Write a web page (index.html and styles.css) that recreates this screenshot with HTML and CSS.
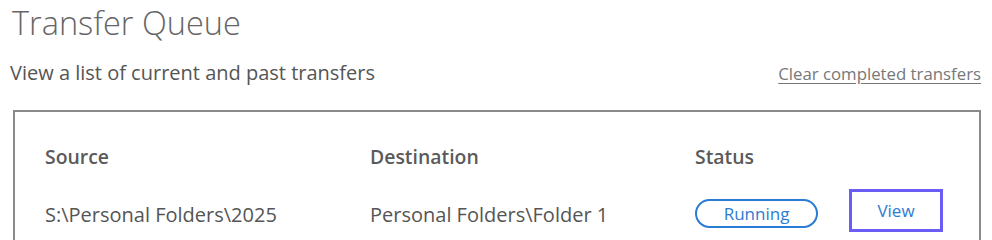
FILE: index.html
```html
<!DOCTYPE html>
<html lang="en">
<head>
<meta charset="utf-8">
<title>Transfer Queue</title>
<link rel="stylesheet" href="styles.css">
</head>
<body>
<main class="page">
  <h1 class="title">Transfer Queue</h1>
  <div class="subhead">
    <p class="subtitle">View a list of current and past transfers</p>
    <a class="clear-link" href="#">Clear completed transfers</a>
  </div>
  <section class="queue">
    <div class="grid">
      <div class="th">Source</div>
      <div class="th">Destination</div>
      <div class="th">Status</div>
      <div class="th"></div>
      <div class="td text-cell">S:\Personal Folders\2025</div>
      <div class="td text-cell">Personal Folders\Folder 1</div>
      <div class="td status-cell"><span class="pill">Running</span></div>
      <div class="td"><button class="view-btn" type="button">View</button></div>
    </div>
  </section>
</main>
</body>
</html>
```

FILE: styles.css
```css
html, body {
  margin: 0;
  padding: 0;
  background: #ffffff;
}
body {
  font-family: "Open Sans", "Noto Sans", "Liberation Sans", sans-serif;
  color: #605e5c;
  overflow: hidden;
}
.page {
  padding: 0 11px 0 10px;
}
.title {
  margin: 0 0 0 2px;
  font-size: 32.5px;
  font-weight: 300;
  line-height: 46px;
  color: #666666;
}
.subhead {
  display: flex;
  justify-content: space-between;
  align-items: baseline;
  margin-top: 14px;
}
.subtitle {
  margin: 0;
  font-size: 20px;
  line-height: 26px;
  color: #555555;
}
.clear-link {
  font-size: 16.8px;
  color: #777777;
  text-decoration: underline;
  text-underline-offset: 3px;
}
.queue {
  margin: 24px 0 0 3px;
  border: 2px solid #8a8a8a;
  border-bottom: none;
  padding: 32px 30px 20px;
  height: 200px;
}
.grid {
  display: grid;
  grid-template-columns: 325px 325px 154px auto;
  row-gap: 19px;
  align-items: start;
}
.th {
  font-size: 19.4px;
  font-weight: 600;
  line-height: 26px;
  color: #5a5a5a;
}
.td {
  font-size: 20px;
  line-height: 26px;
  color: #555555;
}
.text-cell {
  padding-top: 13px;
}
.status-cell {
  padding-top: 10px;
}
.pill {
  display: inline-block;
  box-sizing: border-box;
  width: 123px;
  height: 29px;
  border: 2px solid #2b7cd3;
  border-radius: 15px;
  text-align: center;
  font-size: 17px;
  line-height: 25px;
  color: #2b7cd3;
  vertical-align: top;
}
.view-btn {
  display: block;
  box-sizing: border-box;
  width: 94px;
  height: 43px;
  border: 3px solid #6a5cf5;
  background: #ffffff;
  font-family: inherit;
  font-size: 17px;
  color: #2b7cd3;
  padding: 0;
  cursor: pointer;
}
```
